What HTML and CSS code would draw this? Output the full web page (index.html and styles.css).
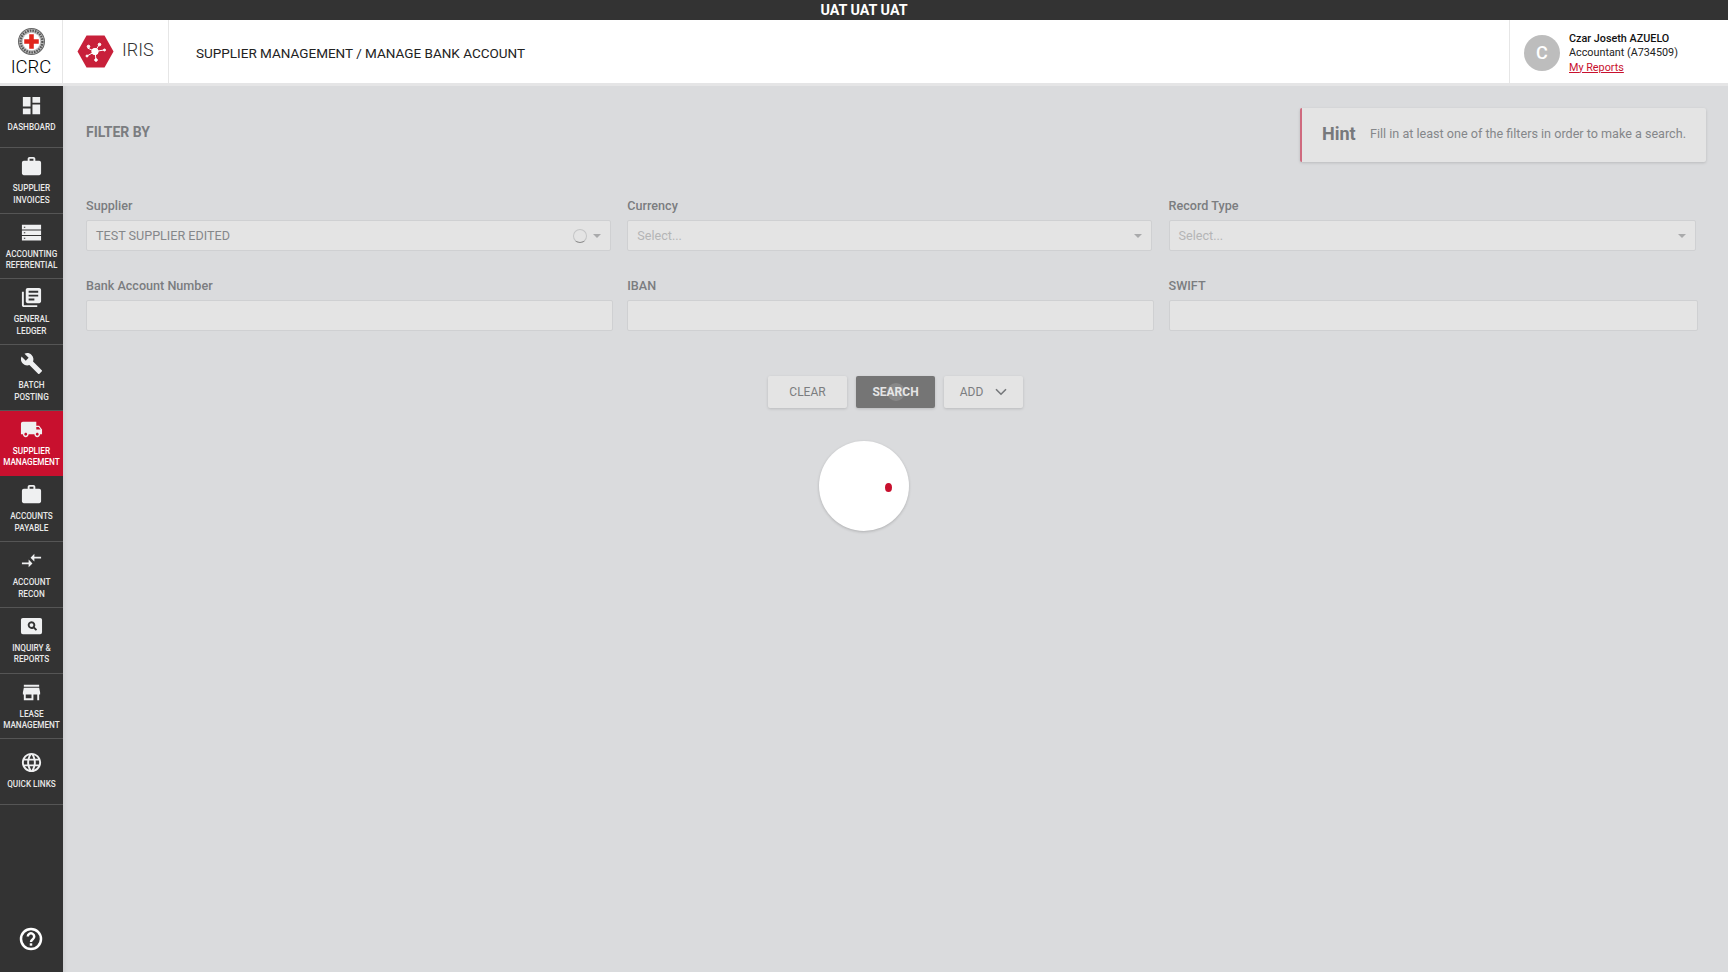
FILE: index.html
```html
<!DOCTYPE html>
<html lang="en">
<head>
    <meta charset="UTF-8">
    <title>IRIS - Manage Bank Account</title>
    <link rel="stylesheet" href="styles.css">
</head>
<body>
    <div class="env-bar">UAT UAT UAT</div>

    <header class="header">
        <div class="org-logo">
            <svg class="org-emblem" width="27" height="27" viewBox="0 0 26 26">
                <circle cx="13" cy="13" r="12.500" fill="#bdbdbd" stroke="#666" stroke-width="1"/>
                <circle cx="13" cy="13" r="10.500" fill="none" stroke="#555" stroke-width="2.200" stroke-dasharray="1.500 1"/>
                <circle cx="13" cy="13" r="8.500" fill="#fff"/>
                <path d="M10.800 6h4.400v4.800H20v4.400h-4.800V20h-4.400v-4.800H6v-4.400h4.800z" fill="#e1251b"/>
            </svg>
            <span class="org-name">ICRC</span>
        </div>
        <div class="app-logo">
            <svg width="37" height="33" viewBox="0 0 37 33">
                <path d="M9.500 0.500h18l9 16-9 16h-18l-9-16z" fill="#c8203a"/>
                <g stroke="#fff" stroke-width="1" fill="#fff">
                    <path d="M18 16.500L10.500 13M18 16.500L22 10M18 16.500L27 15M18 16.500L19 25M18 16.500L10 21" fill="none"/>
                    <circle cx="18" cy="16.500" r="3.200"/>
                    <circle cx="11.500" cy="11.500" r="1.300"/>
                    <circle cx="22.500" cy="9.500" r="1.300"/>
                    <circle cx="27.500" cy="15" r="1"/>
                    <circle cx="19" cy="25" r="1.300"/>
                    <circle cx="10" cy="21" r="1"/>
                </g>
            </svg>
            <span class="app-name">IRIS</span>
        </div>
        <div class="page-title">SUPPLIER MANAGEMENT / MANAGE BANK ACCOUNT</div>
        <div class="user-box">
            <div class="avatar">C</div>
            <div class="user-info">
                <div class="user-name">Czar Joseth AZUELO</div>
                <div>Accountant (A734509)</div>
                <a class="user-link" href="#">My Reports</a>
            </div>
        </div>
    </header>

    <div class="layout">
        <!-- Left menu -->
        <nav class="sidebar">
            <a class="nav-item nav-first" href="#">
                <svg class="nav-icon" viewBox="0 0 24 24"><path d="M3 13h8V3H3v10zm0 8h8v-6H3v6zm10 0h8V11h-8v10zm0-18v6h8V3h-8z"/></svg>
                <span>DASHBOARD</span>
            </a>
            <a class="nav-item" href="#">
                <svg class="nav-icon" viewBox="0 0 24 24"><path d="M20 6h-4V4c0-1.110-.890-2-2-2h-4c-1.110 0-2 .890-2 2v2H4c-1.110 0-1.990.890-1.990 2L2 19c0 1.110.890 2 2 2h16c1.110 0 2-.890 2-2V8c0-1.110-.890-2-2-2zm-6 0h-4V4h4v2z"/></svg>
                <span>SUPPLIER<br>INVOICES</span>
            </a>
            <a class="nav-item" href="#">
                <svg class="nav-icon" viewBox="0 0 24 24"><path d="M2 4h20v4.800H2zM2 9.800h20v4.800H2zM2 15.600h20v4.800H2z"/><path class="nav-icon-cut" d="M4 6h1.500v1H4zM4 11.700h1.500v1H4zM4 17.500h1.500v1H4z"/></svg>
                <span>ACCOUNTING<br>REFERENTIAL</span>
            </a>
            <a class="nav-item" href="#">
                <svg class="nav-icon" viewBox="0 0 24 24"><path d="M4 6H2v14c0 1.100.900 2 2 2h14v-2H4V6zm16-4H8c-1.100 0-2 .900-2 2v12c0 1.100.900 2 2 2h12c1.100 0 2-.900 2-2V4c0-1.100-.900-2-2-2zm-1 9H9V9h10v2zm-4 4H9v-2h6v2zm4-8H9V5h10v2z"/></svg>
                <span>GENERAL<br>LEDGER</span>
            </a>
            <a class="nav-item" href="#">
                <svg class="nav-icon" viewBox="0 0 24 24"><path d="M22.700 19l-9.100-9.100c.900-2.300.400-5-1.500-6.900-2-2-5-2.400-7.400-1.300L9 6 6 9 1.600 4.700C.400 7.100.900 10.100 2.900 12.100c1.900 1.900 4.600 2.400 6.900 1.500l9.100 9.100c.400.400 1 .400 1.400 0l2.300-2.300c.500-.400.500-1.100.100-1.400z"/></svg>
                <span>BATCH<br>POSTING</span>
            </a>
            <a class="nav-item nav-active" href="#">
                <svg class="nav-icon" viewBox="0 0 24 24"><path d="M20 8h-3V4H3c-1.100 0-2 .900-2 2v11h2c0 1.660 1.340 3 3 3s3-1.340 3-3h6c0 1.660 1.340 3 3 3s3-1.340 3-3h2v-5l-3-4zM6 18.500c-.830 0-1.500-.670-1.500-1.500s.670-1.500 1.500-1.500 1.500.670 1.500 1.500-.670 1.500-1.500 1.500zm13.500-9l1.960 2.500H17V9.500h2.500zm-1.500 9c-.830 0-1.500-.670-1.500-1.500s.670-1.500 1.500-1.500 1.500.670 1.500 1.500-.670 1.500-1.500 1.500z"/></svg>
                <span>SUPPLIER<br>MANAGEMENT</span>
            </a>
            <a class="nav-item" href="#">
                <svg class="nav-icon" viewBox="0 0 24 24"><path d="M20 6h-4V4c0-1.110-.890-2-2-2h-4c-1.110 0-2 .890-2 2v2H4c-1.110 0-1.990.890-1.990 2L2 19c0 1.110.890 2 2 2h16c1.110 0 2-.890 2-2V8c0-1.110-.890-2-2-2zm-6 0h-4V4h4v2z"/></svg>
                <span>ACCOUNTS<br>PAYABLE</span>
            </a>
            <a class="nav-item" href="#">
                <svg class="nav-icon" viewBox="0 0 24 24"><path d="M9.010 14H2v2h7.010v3L13 15l-3.990-4v3zm5.980-1v-3H22V8h-7.010V5L11 9l3.990 4z"/></svg>
                <span>ACCOUNT<br>RECON</span>
            </a>
            <a class="nav-item" href="#">
                <svg class="nav-icon" viewBox="0 0 24 24"><path d="M3 3h18a2 2 0 0 1 2 2v13a2 2 0 0 1-2 2H3a2 2 0 0 1-2-2V5a2 2 0 0 1 2-2zm9 3.500a4 4 0 1 0 2 7.500l2.500 2.500 1.400-1.400-2.500-2.500A4 4 0 0 0 12 6.500zm0 2a2 2 0 1 1 0 4 2 2 0 0 1 0-4z" fill-rule="evenodd"/></svg>
                <span>INQUIRY &amp;<br>REPORTS</span>
            </a>
            <a class="nav-item" href="#">
                <svg class="nav-icon" viewBox="0 0 24 24"><path d="M20 4H4v2h16V4zm1 10v-2l-1-5H4l-1 5v2h1v6h10v-6h4v6h2v-6h1zm-9 4H6v-4h6v4z"/></svg>
                <span>LEASE<br>MANAGEMENT</span>
            </a>
            <a class="nav-item nav-single" href="#">
                <svg class="nav-icon" viewBox="0 0 24 24"><path d="M11.990 2C6.470 2 2 6.480 2 12s4.470 10 9.990 10C17.520 22 22 17.520 22 12S17.520 2 11.990 2zm6.930 6h-2.950c-.320-1.250-.780-2.450-1.380-3.560 1.840.630 3.370 1.910 4.330 3.560zM12 4.040c.830 1.200 1.480 2.530 1.910 3.960h-3.820c.430-1.430 1.080-2.760 1.910-3.960zM4.260 14C4.100 13.360 4 12.690 4 12s.100-1.360.260-2h3.380c-.080.660-.140 1.320-.140 2 0 .680.060 1.340.140 2H4.260zm.820 2h2.950c.320 1.250.780 2.450 1.380 3.560-1.840-.630-3.370-1.900-4.330-3.560zm2.950-8H5.080c.960-1.660 2.490-2.930 4.330-3.560C8.810 5.550 8.350 6.750 8.030 8zM12 19.960c-.830-1.200-1.480-2.530-1.910-3.960h3.820c-.430 1.430-1.080 2.760-1.910 3.960zM14.340 14H9.660c-.090-.660-.160-1.320-.160-2 0-.680.070-1.350.160-2h4.680c.090.650.160 1.320.160 2 0 .680-.070 1.340-.160 2zm.250 5.560c.600-1.110 1.060-2.310 1.380-3.560h2.950c-.960 1.650-2.490 2.930-4.330 3.560zM16.360 14c.080-.660.140-1.320.140-2 0-.680-.060-1.340-.140-2h3.380c.160.640.260 1.310.260 2s-.100 1.360-.260 2h-3.380z"/></svg>
                <span>QUICK LINKS</span>
            </a>
            <a class="help-link" href="#">
                <svg width="24" height="24" viewBox="0 0 24 24" fill="none" stroke="#fff" stroke-width="2.500"><circle cx="12" cy="12" r="10"/><path d="M8.800 9.500a3.200 3.200 0 1 1 5 2.700c-1.200.800-1.800 1.400-1.800 2.800"/><path d="M12 16.300v2.400"/></svg>
            </a>
        </nav>

        <!-- Main content -->
        <main class="content">
            <div class="filter-head">
                <h2 class="filter-title">FILTER BY</h2>
                <div class="hint">
                    <span class="hint-title">Hint</span>
                    <span class="hint-text">Fill in at least one of the filters in order to make a search.</span>
                </div>
            </div>

            <div class="filter-grid">
                <div class="field">
                    <label class="field-label">Supplier</label>
                    <div class="select">
                        <span class="select-value">TEST SUPPLIER EDITED</span>
                        <span class="select-spinner"></span>
                        <span class="select-caret"></span>
                    </div>
                </div>
                <div class="field">
                    <label class="field-label">Currency</label>
                    <div class="select">
                        <span class="select-placeholder">Select...</span>
                        <span class="select-caret"></span>
                    </div>
                </div>
                <div class="field">
                    <label class="field-label">Record Type</label>
                    <div class="select">
                        <span class="select-placeholder">Select...</span>
                        <span class="select-caret"></span>
                    </div>
                </div>
                <div class="field">
                    <label class="field-label">Bank Account Number</label>
                    <input class="text-input" type="text">
                </div>
                <div class="field">
                    <label class="field-label">IBAN</label>
                    <input class="text-input" type="text">
                </div>
                <div class="field">
                    <label class="field-label">SWIFT</label>
                    <input class="text-input" type="text">
                </div>
            </div>

            <div class="actions">
                <button class="btn">CLEAR</button>
                <button class="btn btn-dark">SEARCH<span class="ripple"></span></button>
                <button class="btn btn-add">ADD
                    <svg width="12" height="8" viewBox="0 0 12 8" fill="none" stroke="#75777a" stroke-width="1.600"><path d="M1 1.200l5 5 5-5"/></svg>
                </button>
            </div>

            <div class="loader"><span class="loader-dot"></span></div>
        </main>
    </div>
</body>
</html>
```

FILE: styles.css
```css
* {
    box-sizing: border-box;
}

html, body {
    height: 100%;
}

body {
    margin: 0;
    display: flex;
    flex-direction: column;
    font-family: Roboto, "Liberation Sans", sans-serif;
    background-color: #dadbdd;
    overflow: hidden;
}

.env-bar {
    height: 20px;
    flex-shrink: 0;
    background-color: #333;
    color: #fff;
    font-size: 14.300px;
    font-weight: 700;
    line-height: 21px;
    text-align: center;
}

.header {
    height: 66px;
    flex-shrink: 0;
    display: flex;
    background-color: #fff;
    border-bottom: 3px solid #e5e5e6;
    color: #222;
}

.org-logo {
    width: 63px;
    display: flex;
    flex-direction: column;
    align-items: center;
    padding-top: 8px;
    border-right: 1px solid #e6e6e6;
}

.org-emblem {
    display: block;
}

.org-name {
    font-size: 18.500px;
    font-weight: 300;
    line-height: 20px;
    margin-top: 2px;
    color: #000;
}

.app-logo {
    width: 106px;
    display: flex;
    align-items: flex-start;
    gap: 8px;
    padding: 15px 0 0 14px;
    border-right: 1px solid #e6e6e6;
}

.app-name {
    font-size: 18px;
    font-weight: 300;
    line-height: 30px;
    color: #333;
}

.page-title {
    flex-grow: 1;
    padding-left: 27px;
    font-size: 13.500px;
    line-height: 67px;
    color: #222;
}

.user-box {
    width: 219px;
    display: flex;
    align-items: center;
    gap: 9px;
    padding: 3px 0 0 14px;
    border-left: 1px solid #e6e6e6;
    font-size: 10.800px;
    line-height: 14.500px;
}

.avatar {
    width: 36px;
    height: 36px;
    border-radius: 50%;
    background-color: #bdbdbd;
    color: #fff;
    font-size: 18px;
    font-weight: 500;
    line-height: 36px;
    text-align: center;
}

.user-info {
    margin-top: 1px;
}

.user-name {
    font-weight: 500;
    color: #111;
}

.user-link {
    display: block;
    color: #c8102e;
}

.layout {
    flex-grow: 1;
    min-height: 0;
    display: flex;
}

.sidebar {
    width: 63px;
    flex-shrink: 0;
    display: flex;
    flex-direction: column;
    background-color: #333;
}

.nav-item {
    height: 65.700px;
    flex-shrink: 0;
    display: flex;
    flex-direction: column;
    align-items: center;
    padding-top: 7px;
    border-bottom: 1px solid #555;
    color: #e9e9e9;
    font-size: 8.200px;
    font-weight: 500;
    line-height: 11.500px;
    text-align: center;
    text-decoration: none;
}

.nav-first {
    height: 62px;
    padding-top: 8px;
}

.nav-first .nav-icon {
    margin-bottom: 5px;
}

.nav-single {
    padding-top: 12px;
}

.nav-active {
    background-color: #c8102e;
    border-bottom-color: #c8102e;
    color: #fff;
}

.nav-icon {
    width: 23px;
    height: 23px;
    flex-shrink: 0;
    margin-bottom: 5px;
    fill: #eff0f1;
}

.nav-icon-cut {
    fill: #333;
}

.help-link {
    display: block;
    margin: auto 0 21px;
    padding-left: 19px;
    line-height: 0;
}

.content {
    flex-grow: 1;
    position: relative;
    padding: 22px 22px 0 23px;
    box-shadow: inset 5px 0 4px -4px rgba(0, 0, 0, 0.08);
}

.filter-head {
    display: flex;
    justify-content: space-between;
    align-items: flex-start;
}

.filter-title {
    margin: 16px 0 0;
    font-size: 14px;
    font-weight: 700;
    line-height: 16px;
    color: #7b7d80;
}

.hint {
    width: 406px;
    height: 54px;
    display: flex;
    align-items: center;
    padding: 0 0 3px 20px;
    background-color: #e4e4e4;
    border-left: 2px solid #cf6a7e;
    border-radius: 2px;
    box-shadow: 0 1px 3px rgba(0, 0, 0, 0.15);
}

.hint-title {
    width: 48px;
    font-size: 18px;
    font-weight: 700;
    color: #77797c;
}

.hint-text {
    font-size: 12.600px;
    color: #85878a;
}

.filter-grid {
    display: grid;
    grid-template-columns: 527px 527px 529px;
    column-gap: 14.300px;
    row-gap: 27px;
    margin-top: 36px;
}

.field-label {
    display: block;
    margin-bottom: 7px;
    font-size: 12.600px;
    font-weight: 500;
    line-height: 15px;
    color: #7b7d80;
}

.select {
    height: 31px;
    width: calc(100% - 2px);
    display: flex;
    align-items: center;
    padding: 0 9px;
    background-color: #e4e4e4;
    border: 1px solid #cfd0d2;
    border-radius: 2px;
    font-size: 12.600px;
}

.select-value {
    flex-grow: 1;
    color: #85878a;
}

.select-placeholder {
    flex-grow: 1;
    color: #b4b5b6;
}

.select-spinner {
    width: 14px;
    height: 14px;
    margin-right: 6px;
    border: 1px solid #c4c5c6;
    border-bottom-color: #8a8a8a;
    border-radius: 50%;
}

.select-caret {
    width: 0;
    height: 0;
    border-left: 4px solid transparent;
    border-right: 4px solid transparent;
    border-top: 4px solid #a9aaab;
}

.text-input {
    display: block;
    width: 100%;
    height: 31px;
    background-color: #e4e4e4;
    border: 1px solid #cfd0d2;
    border-radius: 2px;
}

.actions {
    display: flex;
    justify-content: center;
    gap: 9px;
    margin-top: 45px;
    margin-left: -1px;
}

.btn {
    position: relative;
    width: 79px;
    height: 32px;
    padding: 0;
    background-color: #e4e4e4;
    border: none;
    border-radius: 2px;
    box-shadow: 0 1px 3px rgba(0, 0, 0, 0.15);
    color: #7b7d80;
    font-family: inherit;
    font-size: 12px;
    font-weight: 400;
}

.btn-dark {
    background-color: #757575;
    color: #e4e4e4;
    font-weight: 700;
}

.btn-add {
    display: flex;
    align-items: center;
    justify-content: center;
    gap: 12px;
}

.ripple {
    position: absolute;
    left: 31px;
    top: 7px;
    width: 18px;
    height: 18px;
    border-radius: 50%;
    background-color: rgba(255, 255, 255, 0.14);
}

/* spinner floats over the page while results load */
.loader {
    position: absolute;
    left: 756px;
    top: 355px;
    width: 90px;
    height: 90px;
    background-color: #fff;
    border-radius: 50%;
    box-shadow: 0 1px 3px rgba(0, 0, 0, 0.2);
}

.loader-dot {
    position: absolute;
    left: 66px;
    top: 42px;
    width: 7px;
    height: 9px;
    background-color: #c8102e;
    border-radius: 50%;
}
```
